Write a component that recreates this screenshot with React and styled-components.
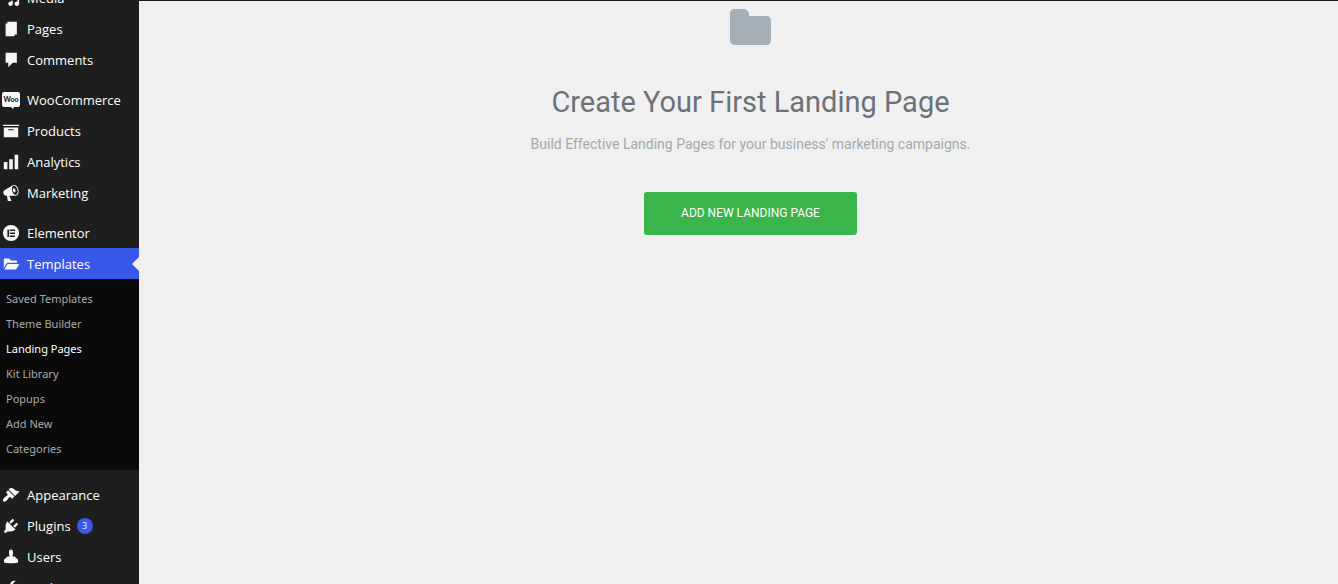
import React from "react";
import styled, { createGlobalStyle, css } from "styled-components";

const GlobalStyle = createGlobalStyle`
  * { box-sizing: border-box; }
  body { margin: 0; background: #f0f0f0; }
`;

const Page = styled.div`
  display: flex;
  height: 100vh;
  overflow: hidden;
  background: #f0f0f0;
  font-family: "Open Sans", "Noto Sans", sans-serif;
`;

const Sidebar = styled.nav`
  flex: none;
  width: 139px;
  overflow: hidden;
  background: #1e1e1e;
`;

/* The menu is scrolled so that its first visible row is cut by the top edge. */
const Menu = styled.ul`
  list-style: none;
  margin: -18px 0 0;
  padding: 0;
`;

const MenuItem = styled.li`
  margin-top: ${(p) => (p.$gap ? p.$gap : 0)}px;
`;

const MenuLink = styled.a`
  position: relative;
  display: flex;
  align-items: center;
  gap: 6px;
  height: 31px;
  padding-left: 1px;
  color: #fff;
  font-size: 13px;
  line-height: 18px;
  text-decoration: none;
  white-space: nowrap;
  ${(p) =>
    p.$current &&
    css`
      background: #3858e9;
      &::after {
        content: "";
        position: absolute;
        right: 0;
        top: 9px;
        border: 7px solid transparent;
        border-right-color: #f0f0f0;
        border-left-width: 0;
      }
    `}
`;

const IconBox = styled.svg`
  flex: none;
  width: 20px;
  height: 18px;
  fill: #f6f6f6;
`;

const Badge = styled.span`
  width: 16px;
  height: 16px;
  border-radius: 8px;
  background: #3858e9;
  font-size: 9px;
  line-height: 16px;
  text-align: center;
`;

const Submenu = styled.ul`
  list-style: none;
  margin: 0;
  padding: 7px 0 9px;
  background: #0a0a0a;
  font-family: "Noto Sans", sans-serif;
`;

const SubLink = styled.a`
  display: block;
  padding-left: 6px;
  font-size: 11px;
  line-height: 25px;
  color: ${(p) => (p.$current ? "#fff" : "#a9a9a9")};
  text-decoration: none;
  white-space: nowrap;
`;

const Main = styled.main`
  flex: 1;
  display: flex;
  flex-direction: column;
  align-items: center;
  padding: 8px 0 0 24px;
  border-top: 1px solid #1d1b22;
  font-family: Roboto, sans-serif;
  text-align: center;
`;

const FolderIcon = styled.svg`
  width: 41px;
  height: 36px;
  fill: #a4afb7;
`;

const Title = styled.h1`
  margin: 39px 0 0;
  color: #6d7278;
  font-size: 29px;
  font-weight: 400;
  line-height: 36px;
`;

const Lead = styled.p`
  margin: 14px 0 0;
  color: #a4a9af;
  font-size: 14px;
  line-height: 20px;
`;

const AddButton = styled.button`
  margin-top: 38px;
  padding: 0 37px 2px;
  height: 43px;
  border: 0;
  border-radius: 3px;
  background: #39b54a;
  color: #fff;
  font-family: inherit;
  font-size: 12px;
  line-height: 20px;
  text-transform: uppercase;
  cursor: pointer;
`;

const paths = {
  media:
    "M13 11V4c0-.55-.45-1-1-1h-1.67L9 1H5L3.67 3H2c-.55 0-1 .45-1 1v7c0 .55.45 1 1 1h10c.55 0 1-.45 1-1zM7 4.5c1.38 0 2.5 1.12 2.5 2.5S8.38 9.5 7 9.5 4.5 8.38 4.5 7 5.62 4.5 7 4.5zM14 6h5v10.5c0 1.38-1.12 2.5-2.5 2.5S14 17.88 14 16.5s1.12-2.5 2.5-2.5c.17 0 .34.02.5.05V9h-3V6zm-4 8.05V13h2v3.5c0 1.38-1.12 2.5-2.5 2.5S7 17.88 7 16.5 8.12 14 9.5 14c.17 0 .34.02.5.05z",
  pages: "M6 2h10.500v14H14v2H4V4h2z",
  comments: "M4 2h12.500v11H12l-5 5v-5H4z",
  products: "M19 3v1.500H1V3zM2 6h16v11H2V6zm11 3V8H7v1.200h6z",
  analytics: "M18 18V2h-4v16h4zm-6 0V7H8v11h4zm-6 0v-8H2v8h4z",
  marketing:
    "M18.150 5.940c.46 1.620.38 3.220-.02 4.480-.42 1.280-1.260 2.180-2.300 2.480-.16.06-.26.06-.4.06-.06.02-.12.02-.18.02-.06.02-.14.02-.22.02h-6.800l2.220 5.500c.02.14-.06.26-.14.34-.08.1-.24.16-.34.16H6.950c-.1 0-.26-.06-.34-.16-.08-.08-.16-.2-.14-.34l-1-5.500H4.250l-.02-.02c-.5.06-1.080-.18-1.540-.62s-.88-1.080-1.060-1.880c-.24-.8-.2-1.560-.02-2.200.18-.62.58-1.080 1.060-1.300l.02-.02 9-5.400c.1-.06.18-.1.24-.16.06-.04.14-.08.24-.12.16-.08.28-.12.5-.18 1.040-.3 2.240.1 3.220.98s1.840 2.240 2.260 3.860zm-2.580 5.980h-.02c.4-.1.74-.34 1.040-.7.58-.7.86-1.760.86-3.040 0-.64-.1-1.300-.28-1.980-.34-1.360-1.020-2.500-1.780-3.240s-1.680-1.100-2.460-.88c-.82.22-1.400.96-1.700 2-.32 1.040-.28 2.360.06 3.720.38 1.360 1 2.500 1.800 3.240.78.74 1.620 1.100 2.480.88zm-2.540-7.080c.22-.04.42-.02.62.04.38.16.76.48 1.020 1s.42 1.200.42 1.780c0 .3-.04.56-.12.8-.18.48-.44.84-.86.94-.34.1-.8-.06-1.140-.4s-.64-.86-.78-1.500c-.18-.62-.12-1.240.02-1.720s.48-.84.82-.94z",
  elementor:
    "M10 1a9 9 0 1 0 0 18 9 9 0 0 0 0-18zM6 6h2v8.500H6zM9 6h5.500v1.700H9zM9 9.400h5.500v1.700H9zM9 12.800h5.500v1.700H9z",
  templates:
    "M2 14.500V5.200c0-.7.500-1.200 1.200-1.200H8l2 2h5.500c.7 0 1.200.5 1.200 1.200V8.500H6.800c-.9 0-1.700.5-2.100 1.200zM2.600 16l3-5.300c.3-.5.7-.7 1.200-.7H18c.6 0 1 .6.7 1.100l-2.500 4.200c-.3.5-.7.7-1.200.7z",
  appearance:
    "M14.480 11.060L7.410 3.990l1.500-1.500c.5-.56 2.300-.47 3.510.32 1.210.8 1.430 1.280 2.910 2.100 1.180.64 2.450 1.260 4.450.85zm-.71.71L6.700 4.700 4.930 6.470c-.39.39-.39 1.020 0 1.410l1.060 1.060c.39.39.39 1.030 0 1.420-.6.6-1.430 1.110-2.210 1.690-.35.26-.7.53-1.010.84C1.430 14.230.4 16.080 1.400 17.070c.99 1 2.840-.03 4.180-1.360.31-.31.58-.66.85-1.020.57-.78 1.080-1.610 1.690-2.210.39-.39 1.020-.39 1.410 0l1.060 1.060c.39.39 1.020.39 1.410 0z",
  plugins:
    "M13.110 4.360L9.870 7.600 8 5.730l3.240-3.240c.35-.34 1.050-.2 1.560.32.52.51.66 1.210.31 1.550zm-8 1.770l.91-1.120 9.010 9.010-1.190.84c-.71.71-2.630 1.160-3.820 1.160H6.140L4.900 17.260c-.59.59-1.540.59-2.120 0-.59-.58-.59-1.530 0-2.120l1.240-1.240v-3.880c0-1.130.4-3.190 1.090-3.890zm7.260 3.970l3.240-3.240c.34-.35 1.040-.21 1.550.31.52.51.66 1.210.31 1.550l-3.240 3.250z",
  users:
    "M7.800 4q0-2.200 2.200-2.200t2.200 2.200v2.500L11.600 9.500h2.400Q15.500 11 17.800 12.800v3Q17 17 10 17T2.200 15.800v-3Q4.500 11 6 9.500h2.400L7.800 6.500z",
  tools:
    "M16.680 9.770c-1.340 1.340-3.300 1.670-4.950.99l-5.410 6.520c-.99.99-2.590.99-3.580 0s-.99-2.590 0-3.570l6.520-5.420c-.68-1.650-.35-3.610.99-4.950 1.280-1.280 3.120-1.620 4.720-1.060l-2.890 2.890 2.820 2.820 2.860-2.870c.53 1.580.18 3.390-1.080 4.650z",
};

function Icon({ name }) {
  if (name === "woo") {
    return (
      <IconBox viewBox="0 0 20 18" aria-hidden="true">
        <path d="M3 1h14q2 0 2 2v11q0 2-2 2h-4l-1 2-2-2H3q-2 0-2-2V3q0-2 2-2z" />
        <text
          x="10"
          y="11"
          textAnchor="middle"
          fontFamily="Lato, sans-serif"
          fontSize="7"
          fontWeight="900"
          fill="#222"
        >
          Woo
        </text>
      </IconBox>
    );
  }
  return (
    <IconBox viewBox="0 0 20 20" aria-hidden="true">
      <path fillRule="evenodd" d={paths[name]} />
    </IconBox>
  );
}

const items = [
  { icon: "media", label: "Media" },
  { icon: "pages", label: "Pages" },
  { icon: "comments", label: "Comments" },
  { icon: "woo", label: "WooCommerce", gap: 9 },
  { icon: "products", label: "Products" },
  { icon: "analytics", label: "Analytics" },
  { icon: "marketing", label: "Marketing" },
  { icon: "elementor", label: "Elementor", gap: 9 },
  {
    icon: "templates",
    label: "Templates",
    current: true,
    children: [
      "Saved Templates",
      "Theme Builder",
      "Landing Pages",
      "Kit Library",
      "Popups",
      "Add New",
      "Categories",
    ],
  },
  { icon: "appearance", label: "Appearance", gap: 9 },
  { icon: "plugins", label: "Plugins", badge: 3 },
  { icon: "users", label: "Users" },
  { icon: "tools", label: "Tools" },
];

export default function App() {
  return (
    <Page>
      <GlobalStyle />
      <Sidebar aria-label="Main menu">
        <Menu>
          {items.map((item) => (
            <MenuItem key={item.label} $gap={item.gap}>
              <MenuLink href="#" $current={item.current}>
                <Icon name={item.icon} />
                <span>{item.label}</span>
                {item.badge && <Badge>{item.badge}</Badge>}
              </MenuLink>
              {item.children && (
                <Submenu>
                  {item.children.map((child) => (
                    <li key={child}>
                      <SubLink href="#" $current={child === "Landing Pages"}>
                        {child}
                      </SubLink>
                    </li>
                  ))}
                </Submenu>
              )}
            </MenuItem>
          ))}
        </Menu>
      </Sidebar>
      <Main>
        <FolderIcon viewBox="0 0 41 36" aria-hidden="true">
          <path d="M5 0h8q5 0 6 5v2h17q5 0 5 5v19q0 5-5 5H5q-5 0-5-5V5q0-5 5-5z" />
        </FolderIcon>
        <Title>Create Your First Landing Page</Title>
        <Lead>Build Effective Landing Pages for your business' marketing campaigns.</Lead>
        <AddButton type="button">Add New Landing Page</AddButton>
      </Main>
    </Page>
  );
}
